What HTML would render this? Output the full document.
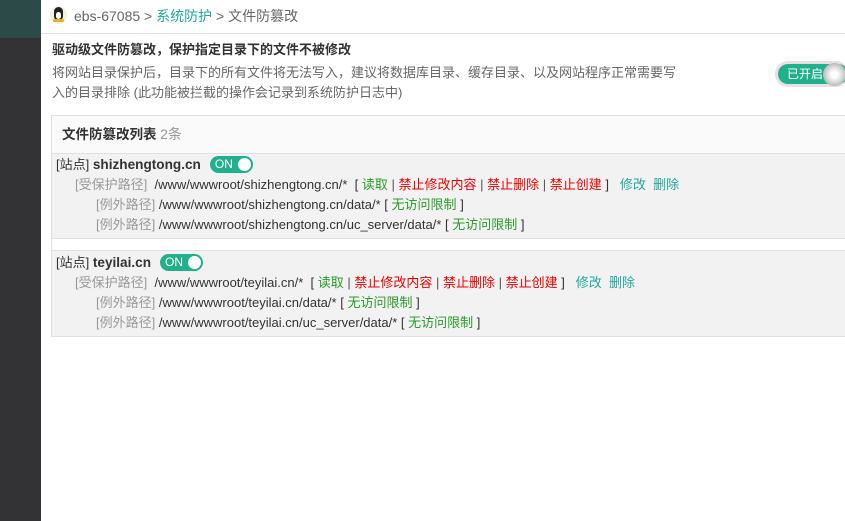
<!DOCTYPE html>
<html><head><meta charset="utf-8"><style>
*{margin:0;padding:0;box-sizing:border-box}
body{width:845px;height:521px;overflow:hidden;background:#fff;font-family:"Liberation Sans","Noto Sans CJK SC",sans-serif;font-size:13px;color:#555;position:relative}
.a{position:absolute;white-space:nowrap;line-height:20px}
.g{color:#999}.gr{color:#2a9a2a}.r{color:#e00}.t{color:#20a89a}.k{color:#333}
.tog{display:inline-block;vertical-align:middle;width:43px;height:17px;border-radius:9px;background:#20b08c;position:relative;color:#fff;font-size:12px;line-height:17px;padding-left:5px;margin-left:9px;margin-top:-3px}
.tog:after{content:"";position:absolute;right:2px;top:2px;width:13px;height:13px;border-radius:50%;background:#fff}
.blk{position:absolute;left:51px;width:794px;background:#f2f2f2;border-top:1px solid #e0e0e0;border-bottom:1px solid #e0e0e0;border-left:1px solid #e0e0e0}
.sn{font-weight:bold;color:#333;font-size:13.6px}
</style></head><body>
<div style="position:absolute;left:0;top:0;width:41px;height:38px;background:#2c4a47"></div>
<div style="position:absolute;left:0;top:38px;width:41px;height:483px;background:#333336"></div>
<div style="position:absolute;left:41px;top:33px;width:804px;height:1px;background:#e2e2e2"></div>
<div style="position:absolute;left:50px;top:6px;width:17px;height:18px;border-radius:50%;background:#f4f0e0"></div>
<div style="position:absolute;left:54px;top:7px;width:9px;height:13px;border-radius:5px 5px 4px 4px;background:#222"></div>
<div style="position:absolute;left:56px;top:12px;width:5px;height:7px;border-radius:3px;background:#fff"></div>
<div style="position:absolute;left:53px;top:19px;width:11px;height:3px;background:#e8b020;border-radius:2px"></div>
<div class="a" style="left:74px;top:6px;color:#666;font-size:14px">ebs-67085 &gt; <span style="color:#20a89a">系统防护</span> &gt; 文件防篡改</div>
<div class="a k" style="left:52px;top:40px;font-weight:bold">驱动级文件防篡改，保护指定目录下的文件不被修改</div>
<div class="a" style="left:52px;top:63px;color:#666">将网站目录保护后，目录下的所有文件将无法写入，建议将数据库目录、缓存目录、以及网站程序正常需要写</div>
<div class="a" style="left:52px;top:83px;color:#666">入的目录排除 (此功能被拦截的操作会记录到系统防护日志中)</div>
<div style="position:absolute;left:775px;top:61px;width:74px;height:26px;border-radius:13px;background:#e8e0e6"></div>
<div style="position:absolute;left:778px;top:64px;width:70px;height:20px;border-radius:10px;background:#20b08c;color:#fff;font-size:12px;line-height:20px;padding-left:9px">已开启</div>
<div style="position:absolute;left:823px;top:63px;width:23px;height:23px;border-radius:50%;background:radial-gradient(circle,#fff 20%,#bbb 70%,#999)"></div>
<div style="position:absolute;left:51px;top:115px;width:794px;height:39px;background:#fafafa;border-top:1px solid #e0e0e0;border-left:1px solid #e0e0e0"></div>
<div class="a" style="left:62px;top:124px"><span class="k" style="font-weight:bold;font-size:13.5px">文件防篡改列表</span> <span class="g" style="font-size:14px">2条</span></div>
<div class="blk" style="top:153px;height:86px"></div>
<div class="a" style="left:56px;top:155px"><span class="k">[站点]</span> <span class="sn">shizhengtong.cn</span><span class="tog">ON</span></div>
<div class="a" style="left:75px;top:175px"><span class="g">[受保护路径]</span>&nbsp; <span class="k">/www/wwwroot/shizhengtong.cn/*</span>&nbsp; <span class="k">[</span> <span class="gr">读取</span> | <span class="r">禁止修改内容</span> | <span class="r">禁止删除</span> | <span class="r">禁止创建</span> <span class="k">]</span>&nbsp;&nbsp; <span class="t">修改</span>&nbsp; <span class="t">删除</span></div>
<div class="a" style="left:96px;top:195px"><span class="g">[例外路径]</span> <span class="k">/www/wwwroot/shizhengtong.cn/data/* [</span> <span class="gr">无访问限制</span> <span class="k">]</span></div>
<div class="a" style="left:96px;top:215px"><span class="g">[例外路径]</span> <span class="k">/www/wwwroot/shizhengtong.cn/uc_server/data/* [</span> <span class="gr">无访问限制</span> <span class="k">]</span></div>
<div style="position:absolute;left:51px;top:239px;width:1px;height:11px;background:#e0e0e0"></div>
<div class="blk" style="top:250px;height:87px"></div>
<div class="a" style="left:56px;top:253px"><span class="k">[站点]</span> <span class="sn">teyilai.cn</span><span class="tog">ON</span></div>
<div class="a" style="left:75px;top:273px"><span class="g">[受保护路径]</span>&nbsp; <span class="k">/www/wwwroot/teyilai.cn/*</span>&nbsp; <span class="k">[</span> <span class="gr">读取</span> | <span class="r">禁止修改内容</span> | <span class="r">禁止删除</span> | <span class="r">禁止创建</span> <span class="k">]</span>&nbsp;&nbsp; <span class="t">修改</span>&nbsp; <span class="t">删除</span></div>
<div class="a" style="left:96px;top:293px"><span class="g">[例外路径]</span> <span class="k">/www/wwwroot/teyilai.cn/data/* [</span> <span class="gr">无访问限制</span> <span class="k">]</span></div>
<div class="a" style="left:96px;top:313px"><span class="g">[例外路径]</span> <span class="k">/www/wwwroot/teyilai.cn/uc_server/data/* [</span> <span class="gr">无访问限制</span> <span class="k">]</span></div>
</body></html>
